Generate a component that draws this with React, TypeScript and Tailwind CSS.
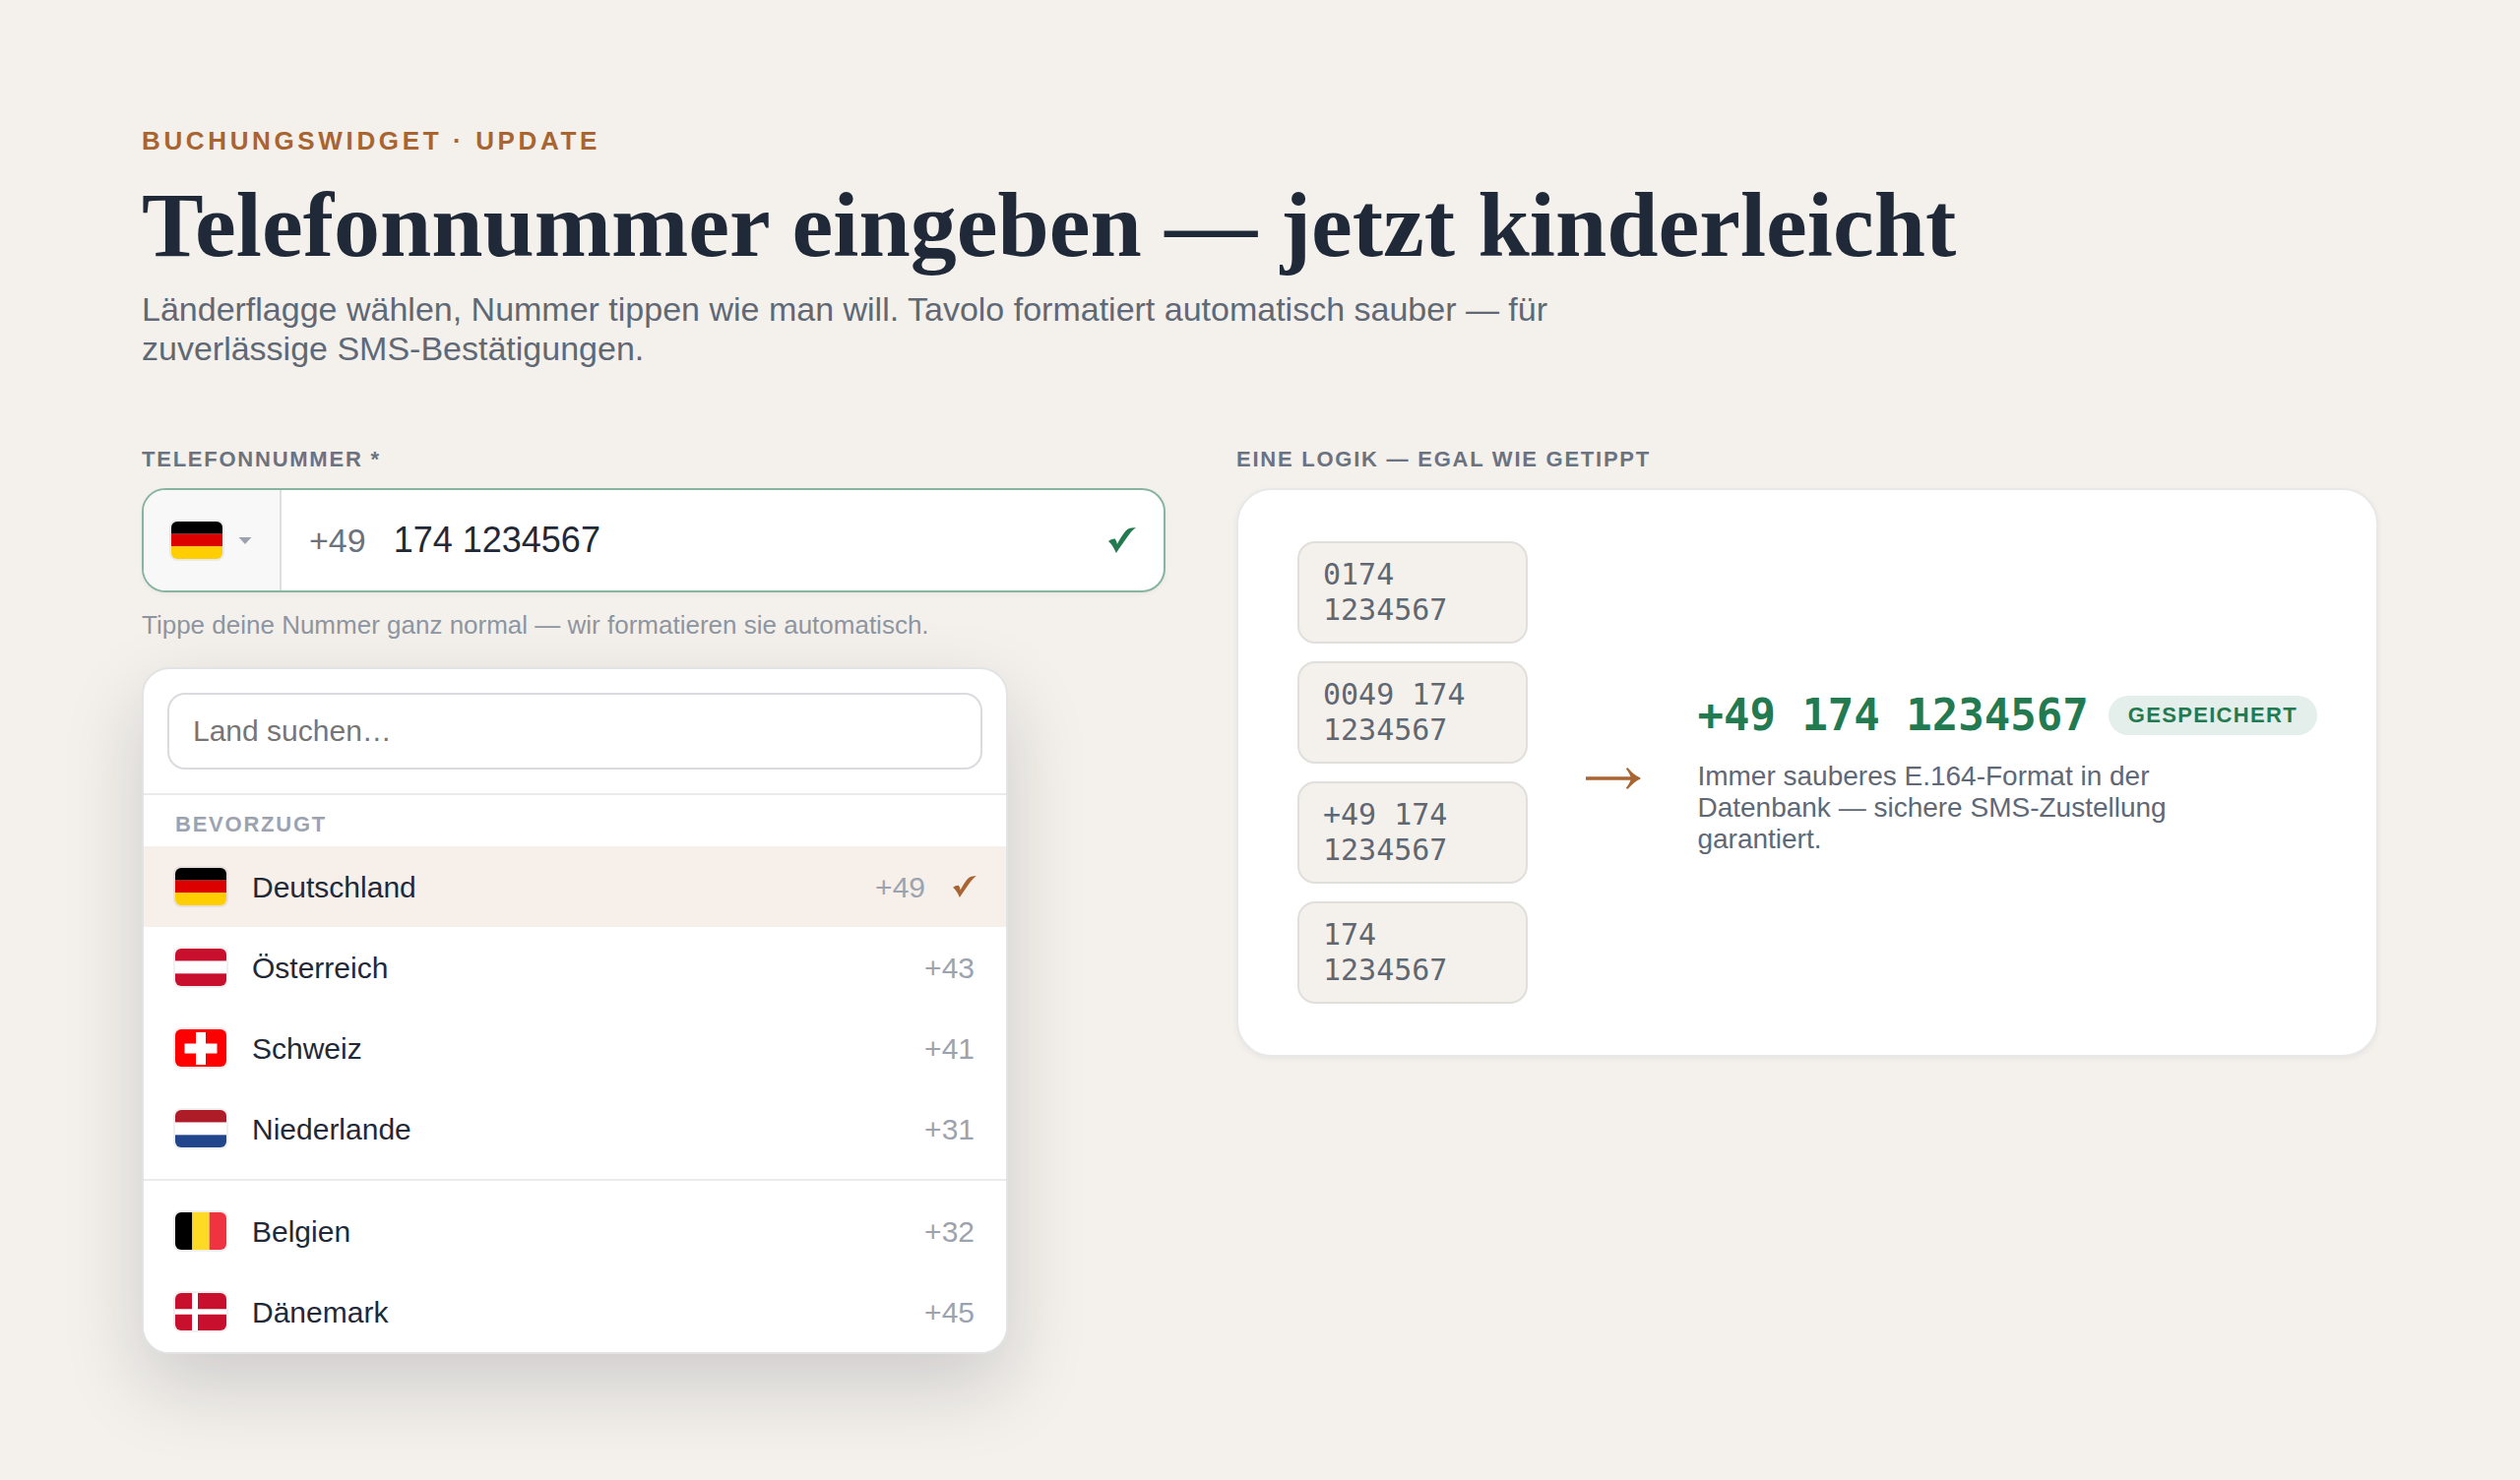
import { useState } from 'react';
import type { ReactNode } from 'react';

type Country = { iso: string; name: string; dial: string };

const PREFERRED: Country[] = [
  { iso: 'de', name: 'Deutschland', dial: '+49' },
  { iso: 'at', name: 'Österreich', dial: '+43' },
  { iso: 'ch', name: 'Schweiz', dial: '+41' },
  { iso: 'nl', name: 'Niederlande', dial: '+31' },
];

const OTHERS: Country[] = [
  { iso: 'be', name: 'Belgien', dial: '+32' },
  { iso: 'dk', name: 'Dänemark', dial: '+45' },
];

const VARIANTS = ['0174 1234567', '0049 174 1234567', '+49 174 1234567', '174 1234567'];

function Stripes({ colors, vertical }: { colors: string[]; vertical?: boolean }) {
  return (
    <>
      {colors.map((c, i) =>
        vertical ? (
          <rect key={i} x={(i * 52) / 3} y="0" width={52 / 3} height="38" fill={c} />
        ) : (
          <rect key={i} x="0" y={(i * 38) / 3} width="52" height={38 / 3} fill={c} />
        )
      )}
    </>
  );
}

const FLAGS: Record<string, ReactNode> = {
  de: <Stripes colors={['#000000', '#dd0000', '#ffce00']} />,
  at: <Stripes colors={['#c8102e', '#ffffff', '#c8102e']} />,
  ch: (
    <>
      <rect width="52" height="38" fill="#ff0000" />
      <path d="M21 3h10v11.5h11.5v10H31V36H21V24.500H9.500v-10H21z" fill="#ffffff" />
    </>
  ),
  nl: <Stripes colors={['#ae1c28', '#ffffff', '#21468b']} />,
  be: <Stripes vertical colors={['#000000', '#fdda24', '#ef3340']} />,
  dk: (
    <>
      <rect width="52" height="38" fill="#c8102e" />
      <path d="M17 0h6v38h-6zM0 16.300h52v5.500H0z" fill="#ffffff" />
    </>
  ),
};

function Flag({ iso }: { iso: string }) {
  return (
    <span className="block h-[38px] w-[52px] flex-shrink-0 overflow-hidden rounded-md shadow-[0_0_0_2px_rgba(0,0,0,0.06)]">
      <svg viewBox="0 0 52 38" className="block h-full w-full" aria-hidden="true">{FLAGS[iso]}</svg>
    </span>
  );
}

function Check({ className }: { className: string }) {
  return (
    <svg viewBox="0 0 28 26" className={className} fill="currentColor" aria-hidden="true">
      <path d="M0 14C1.800 12.500 4.200 11.500 6.700 11.600C7.800 13 8.500 14.800 8.900 17C11.500 11.900 14.400 7.300 17.600 3.600C20.200 .7 22.800 0 28 .3C24.700 2.500 22.200 5.400 19.700 9C16 14.300 11.900 20.100 7.900 26C6.100 21.400 3.600 17.300 0 14Z" />
    </svg>
  );
}

function CountryRow({ country, selected, onSelect }: { country: Country; selected: boolean; onSelect: () => void }) {
  return (
    <button
      type="button"
      onClick={onSelect}
      className={`flex h-[82px] w-full items-center pl-8 text-left text-[30px] ${selected ? 'bg-[#f6efea] pr-[30px]' : 'bg-white pr-8'}`}
    >
      <Flag iso={country.iso} />
      <span className="ml-[26px] flex-1 text-[#1f2937]">{country.name}</span>
      <span className="text-[#9ca3af]">{country.dial}</span>
      {selected && <Check className="ml-7 h-[22px] w-6 text-[#a86431]" />}
    </button>
  );
}

export default function App() {
  const [number, setNumber] = useState('174 1234567');
  const [search, setSearch] = useState('');
  const [selected, setSelected] = useState(PREFERRED[0]);

  const matches = (c: Country) => c.name.toLowerCase().includes(search.toLowerCase());
  const row = (c: Country) => (
    <CountryRow key={c.iso} country={c} selected={c.iso === selected.iso} onSelect={() => setSelected(c)} />
  );

  return (
    <main className="min-h-screen bg-[#f4f1ec] px-36 py-32 font-['Liberation_Sans',Arial,sans-serif]">
      <header>
        <p className="text-[26px] leading-[30px] font-bold tracking-[0.14em] text-[#a86431]">BUCHUNGSWIDGET · UPDATE</p>
        <h1 className="mt-6 text-[94px] leading-[92px] font-bold text-[#1f2937] font-[Georgia,'Liberation_Serif',serif]">
          Telefonnummer eingeben — jetzt kinderleicht
        </h1>
        <p className="mt-5 max-w-[1440px] text-[34px] leading-10 text-[#606875]">
          Länderflagge wählen, Nummer tippen wie man will. Tavolo formatiert automatisch sauber — für zuverlässige SMS-Bestätigungen.
        </p>
      </header>

      <div className="mt-20 grid grid-cols-[26fr_29fr] items-start gap-18">
        <section>
          <label htmlFor="phone" className="block text-[22px] leading-[26px] font-bold tracking-[0.08em] text-[#6b7280]">
            TELEFONNUMMER *
          </label>
          <div className="mt-4 flex h-[106px] overflow-hidden rounded-3xl border-2 border-[#87b4a1] bg-white shadow-[0_2px_4px_rgba(0,0,0,0.04)]">
            <button type="button" aria-label="Land wählen" className="flex items-center gap-4 border-r-2 border-[#dddee0] bg-[#f8f8f8] px-7">
              <Flag iso={selected.iso} />
              <svg viewBox="0 0 14 8" className="h-2 w-3.5 text-[#9ca3af]" fill="currentColor" aria-hidden="true">
                <path d="M.5 1h13L7 8z" />
              </svg>
            </button>
            <div className="flex flex-1 items-center px-7">
              <span className="text-[34px] text-[#6b7280]">{selected.dial}</span>
              <input
                id="phone"
                type="tel"
                value={number}
                onChange={e => setNumber(e.target.value)}
                className="ml-7 min-w-0 flex-1 bg-transparent text-[36px] text-[#1f2937] outline-none"
              />
              <Check className="h-[26px] w-7 text-[#247a50]" />
            </div>
          </div>
          <p className="mt-[18px] text-[26px] leading-[30px] text-[#8d95a1]">
            Tippe deine Nummer ganz normal — wir formatieren sie automatisch.
          </p>

          <div className="mt-7 max-w-[880px] overflow-hidden rounded-[28px] border-2 border-[#e2e3e4] bg-white shadow-[0_32px_80px_rgba(17,24,39,0.17)]">
            <div className="border-b-2 border-[#eaebec] p-6">
              <input
                type="text"
                aria-label="Land suchen"
                placeholder="Land suchen…"
                value={search}
                onChange={e => setSearch(e.target.value)}
                className="block h-[78px] w-full rounded-[18px] border-2 border-[#dadbde] px-6 text-[30px] text-[#1f2937] placeholder-[#757575] outline-none"
              />
            </div>
            <h2 className="px-8 pt-[18px] pb-2.5 text-[22px] leading-6 font-bold tracking-[0.08em] text-[#9ca3af]">BEVORZUGT</h2>
            {PREFERRED.filter(matches).map(row)}
            <hr className="my-2.5 border-t-2 border-[#eaebec]" />
            {OTHERS.filter(matches).map(row)}
          </div>
        </section>

        <section>
          <h2 className="text-[22px] leading-[26px] font-bold tracking-[0.08em] text-[#6b7280]">EINE LOGIK — EGAL WIE GETIPPT</h2>
          <div className="mt-4 flex items-center gap-14 rounded-[36px] border-2 border-[#e8e8e9] bg-white px-[60px] py-[52px] shadow-[0_2px_6px_rgba(0,0,0,0.05)]">
            <ul className="flex min-w-0 flex-1 flex-col gap-[18px]">
              {VARIANTS.map(v => (
                <li
                  key={v}
                  className="rounded-[18px] border-2 border-[#e0dfdc] bg-[#f4f1ec] px-6 py-3.5 font-['DejaVu_Sans_Mono',monospace] text-[30px] leading-9 text-[#5f6773]"
                >
                  {v}
                </li>
              ))}
            </ul>
            <svg viewBox="0 -6 60 36" className="h-9 w-[60px] flex-shrink-0 text-[#a86431]" fill="currentColor" aria-label="wird zu">
              <path d="M3 16.300H48.500C47.500 13.500 46 11 44.300 9C43.600 7.900 44.600 6.800 45.900 7.400C49.500 11.500 53 15 58.500 17.500V18.500C53 21 49.500 24.500 45.900 28.600C44.600 29.200 43.600 28.100 44.300 27C46 25 47.500 22.500 48.500 19.700H3Z" />
            </svg>
            <div className="flex-shrink-0">
              <div className="flex items-center gap-5">
                <span className="font-['DejaVu_Sans_Mono',monospace] text-[44px] leading-[52px] font-bold text-[#247a50]">+49 174 1234567</span>
                <span className="rounded-full bg-[#e4eeea] px-5 text-[22px] leading-10 font-bold tracking-[0.06em] text-[#247a50]">GESPEICHERT</span>
              </div>
              <p className="mt-5 max-w-[520px] text-[28px] leading-8 text-[#606875]">
                Immer sauberes E.164-Format in der Datenbank — sichere SMS-Zustellung garantiert.
              </p>
            </div>
          </div>
        </section>
      </div>
    </main>
  );
}
